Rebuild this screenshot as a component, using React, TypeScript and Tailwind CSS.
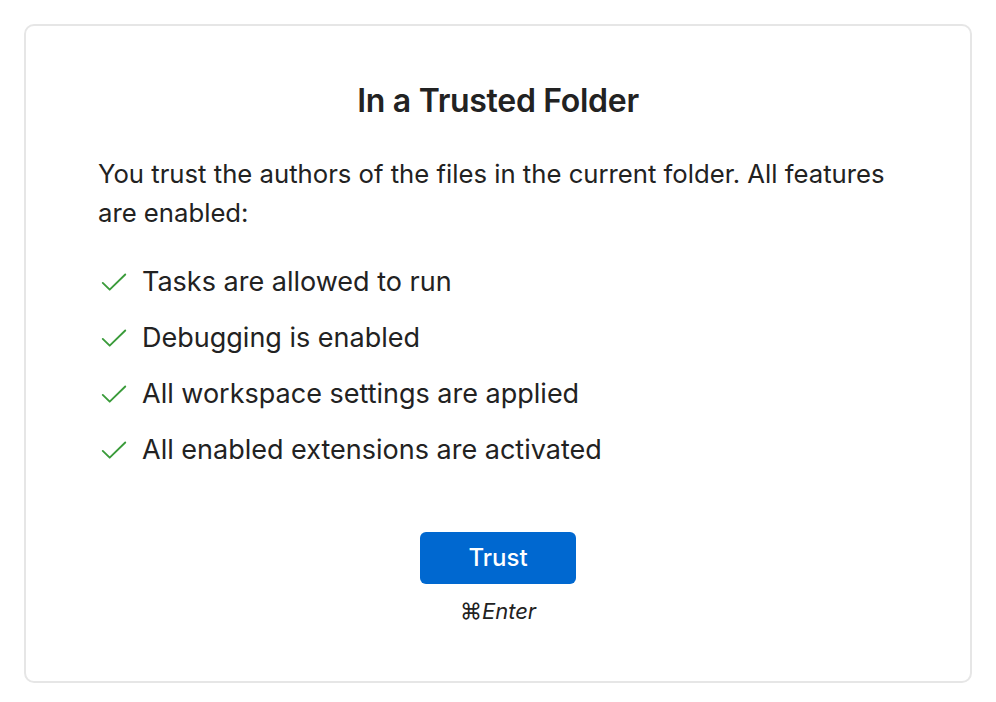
export default function App() {
  const items = [
    "Tasks are allowed to run",
    "Debugging is enabled",
    "All workspace settings are applied",
    "All enabled extensions are activated",
  ];

  return (
    <div className="w-[996px] h-[702px] bg-white p-6 font-['Inter',_'Noto_Sans',_sans-serif] text-[#222]">
      <div className="h-[659px] rounded-[10px] border-2 border-[#e6e6e6] px-[72px] pt-[57px]">
        <h1 className="text-center text-[32px] font-semibold leading-[36px] tracking-[-0.3px]">
          In a Trusted Folder
        </h1>
        <p className="mt-[35px] text-[25.7px] leading-[39px]">
          You trust the authors of the files in the current folder. All features are enabled:
        </p>
        <ul className="mt-[30px] flex flex-col gap-[17px]">
          {items.map((t) => (
            <li key={t} className="flex items-center text-[27px] leading-[39px]">
              <svg width="30" height="30" viewBox="0 0 16 16" className="ml-[1px] mr-[13px] shrink-0">
                <path d="M2 8.5l3.7 3.6L14 4" fill="none" stroke="#3a9b3a" strokeWidth="1" strokeLinecap="round" strokeLinejoin="round" />
              </svg>
              {t}
            </li>
          ))}
        </ul>
        <div className="mt-[63px] flex flex-col items-center">
          <button className="h-[52px] w-[156px] rounded-[6px] bg-[#0068d0] text-[24px] font-medium text-white">
            Trust
          </button>
          <div className="mt-[12px] text-[22px] leading-[30px]">
            <span>⌘</span>
            <span className="italic">Enter</span>
          </div>
        </div>
      </div>
    </div>
  );
}
